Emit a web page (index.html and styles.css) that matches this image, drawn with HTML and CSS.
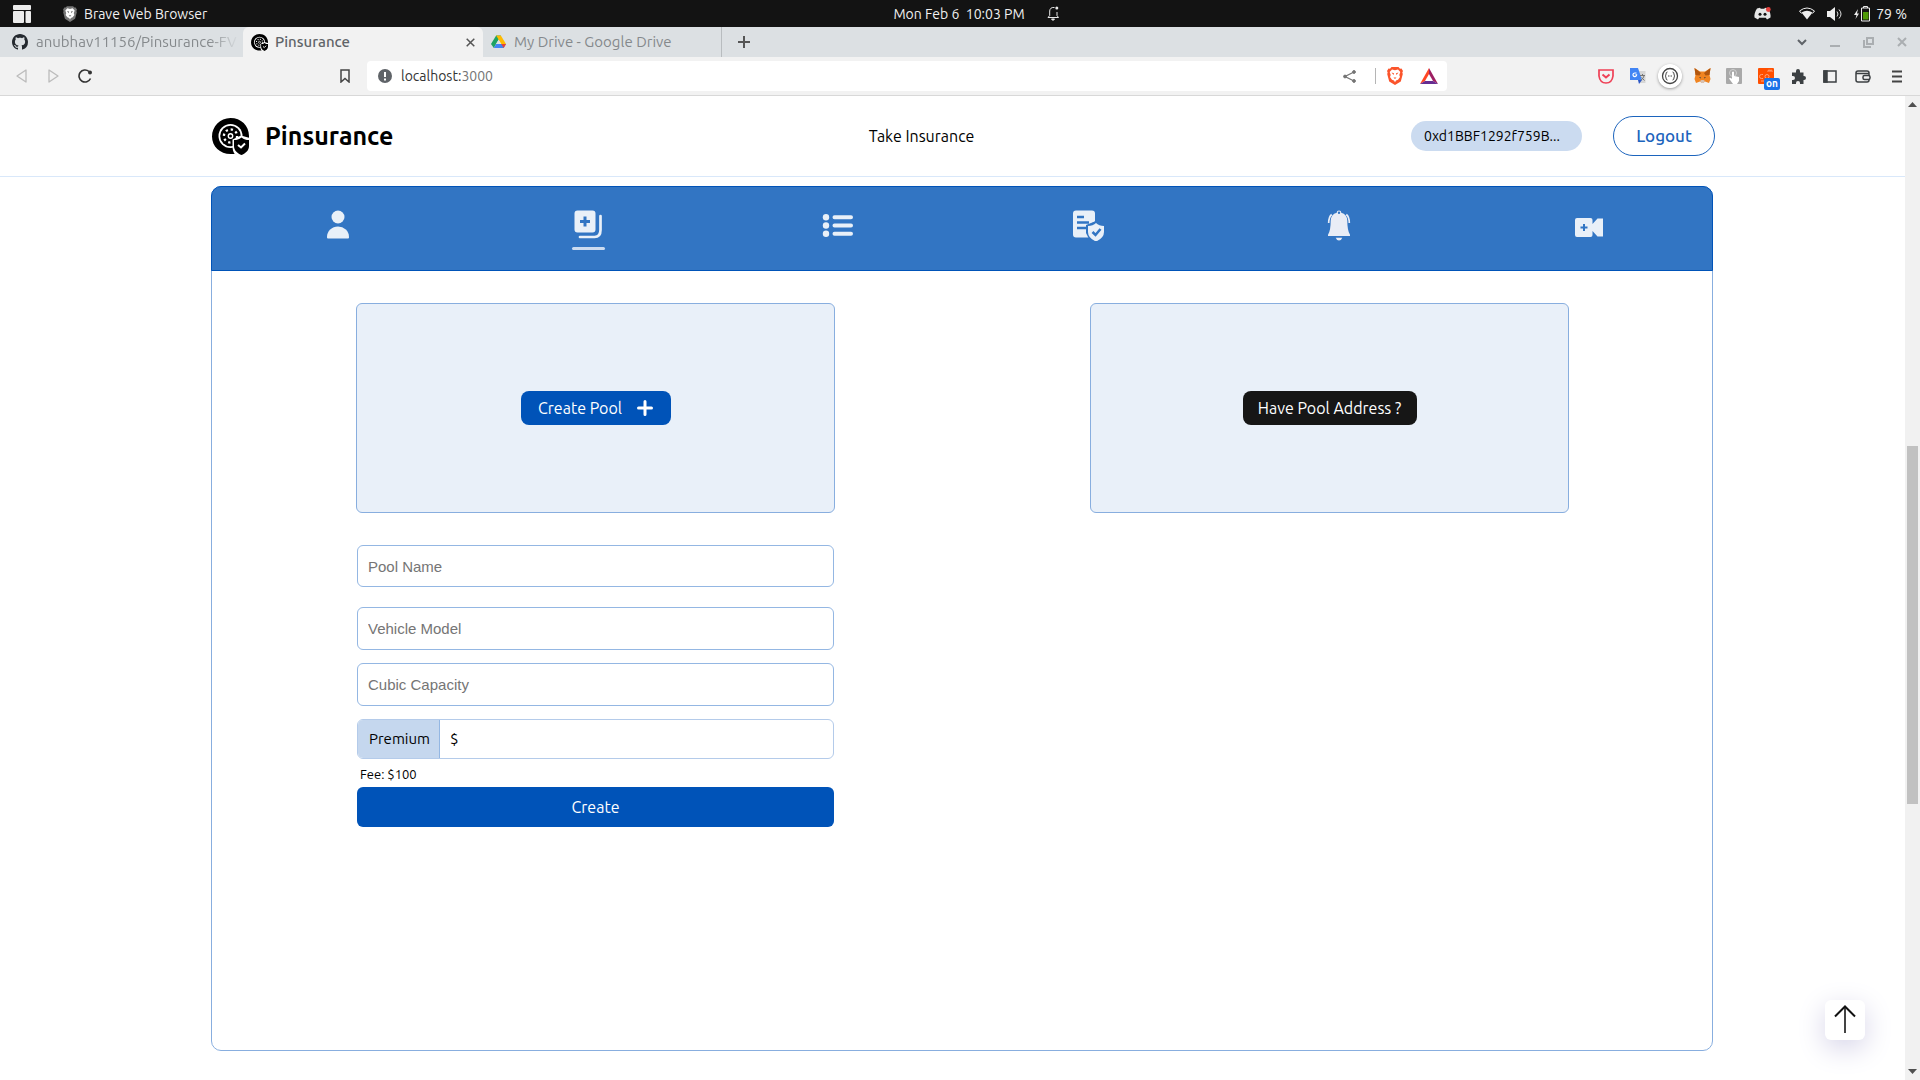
FILE: index.html
```html
<!DOCTYPE html>
<html lang="en">
<head>
<meta charset="utf-8">
<meta name="viewport" content="width=device-width, initial-scale=1">
<title>Pinsurance</title>
<link rel="stylesheet" href="styles.css">
</head>
<body>
<svg width="0" height="0" class="defs" aria-hidden="true">
  <symbol id="logo" viewBox="0 0 37 37">
    <path d="M18.500 0C29 0 37 7.500 37 18V30L30 37L23 36H18.500C8 36 0 28.500 0 18.500S8 0 18.500 0Z"/>
    <circle cx="18.500" cy="18" r="12" fill="#fff"/>
    <circle cx="18.500" cy="18" r="10.300"/>
    <circle cx="18.500" cy="18" r="6.600" fill="none" stroke="#fff" stroke-width="2.300" stroke-dasharray="2.300 2.880"/>
    <circle cx="18.500" cy="18" r="2.200" fill="none" stroke="#fff" stroke-width="1.400"/>
    <path d="M29 17.500 L38 20V29C38 34 32 37.500 29.500 38L23 36.500C21 34 20.500 31 20.500 28V21.500Z" fill="#fff"/>
    <path d="M29.500 19.500C32 21.500 34 22 37 22V28C37 33 33 35.500 29.500 37C26 35.500 22 33 22 28V22C25 22 27 21.500 29.500 19.500Z"/>
    <path d="M26 27l3 2.500 4-4" fill="none" stroke="#fff" stroke-width="2"/>
  </symbol>
  <symbol id="lion" viewBox="0 0 16 18">
    <path d="M4.500 0h7l1.500 1.700 1.500-.2L16 4l-.7 1.500.5 1.500-2 7.500L8 18l-5.800-3.500L.2 7l.5-1.500L0 4l1.500-2.500 1.500.2z" fill="currentColor"/>
    <path d="M8 3.200l3-.7 2.300 2.600-1 3 .7 1.900-2 2.700-2 .8L8 15.300l-1-1.800-2-.8L3 10l.7-1.900-1-3L5 2.500z" fill="#fff"/>
    <path d="M4.500 5.500l2.500.7L6.500 8zM11.500 5.500L9 6.200l.5 1.800zM6.500 10.500h3L8 12z" fill="currentColor"/>
  </symbol>
</svg>

<div class="topbar">
  <div class="topbar-left">
    <svg width="18" height="18" viewBox="0 0 18 18" fill="#ececec"><rect width="18" height="5" rx="1"/><rect y="6" width="11" height="12" rx="1"/><rect x="12.500" y="6" width="5.500" height="12" rx="1"/></svg>
    <div class="app-name">
      <svg width="14" height="16" class="lion-gray"><use href="#lion"/></svg>
      <span>Brave Web Browser</span>
    </div>
  </div>
  <div class="topbar-clock">
    <span>Mon Feb 6&nbsp; 10:03 PM</span>
    <svg width="12" height="15" viewBox="0 0 12 15" fill="none" stroke="#e8e8e8"><path d="M1 11.500h10.500L10 9.500V6M7.500 1.500C4 1 2.800 3 2.700 5v4.500L1 11.500"/><path d="M4.500 13h3L6 14.500z" fill="#e8e8e8"/><circle cx="9.800" cy="2" r="1.500" fill="#e8e8e8" stroke="none"/></svg>
  </div>
  <div class="topbar-right">
    <svg class="discord" width="17" height="13" viewBox="0 0 17 13"><path d="M3 1.500L6 .8l.7 1h3.600l.7-1 3 .7C16 4.500 17 8 16.500 10.500L13 12.500l-1.200-1.700H5.200L4 12.500.5 10.500C0 8 1 4.500 3 1.500z" fill="#e6e6e6"/><circle cx="6" cy="7.300" r="1.500" fill="#131313"/><circle cx="11" cy="7.300" r="1.500" fill="#131313"/><circle cx="14.300" cy="2.500" r="2.400" fill="#e4413e"/></svg>
    <svg width="16" height="13" viewBox="0 0 16 13"><path d="M2.500 5.500Q8 2 13.500 5.500L8 12.500z" fill="#eee"/><path d="M.5 4Q8-2 15.500 4L13.500 6.500" fill="none" stroke="#eee"/><path d="M.5 4l2 2.500" stroke="#eee"/></svg>
    <svg class="volume" width="16" height="14" viewBox="0 0 16 14"><path d="M0 4h3l5-4v14l-5-4H0z" fill="#eee"/><path d="M10 4.500q2 2.500 0 5M12 2.500q4 4.500 0 9" fill="none" stroke="#ddd"/></svg>
    <div class="battery">
      <svg width="17" height="16" viewBox="0 0 17 16"><path d="M4 3L0 9h2.500L1.500 13 5 7.500H3z" fill="#eee"/><path d="M9.500 2V.5h4V2M7.500 2h8v13h-8z" fill="none" stroke="#eee"/><rect x="9" y="6" width="5.500" height="7.500" fill="#4e9a06"/></svg>
      <span>79 %</span>
    </div>
  </div>
</div>

<div class="tabstrip">
  <div class="tab tab-github">
    <svg width="16" height="16" viewBox="0 0 16 16" fill="#24292f"><path d="M8 0C3.580 0 0 3.580 0 8c0 3.540 2.290 6.530 5.470 7.590.4.070.55-.17.55-.38 0-.19-.01-.82-.01-1.490-2.010.37-2.530-.49-2.690-.94-.09-.23-.48-.94-.82-1.130-.28-.15-.68-.52-.01-.53.63-.01 1.080.58 1.230.82.72 1.210 1.870.87 2.330.66.07-.52.28-.87.51-1.070-1.780-.2-3.640-.89-3.640-3.950 0-.87.31-1.590.82-2.150-.08-.2-.36-1.020.08-2.120 0 0 .67-.21 2.200.82.64-.18 1.320-.27 2-.27s1.360.09 2 .27c1.530-1.040 2.200-.82 2.200-.82.44 1.100.16 1.920.08 2.120.51.56.82 1.270.82 2.150 0 3.070-1.870 3.750-3.650 3.950.29.25.54.73.54 1.480 0 1.070-.01 1.930-.01 2.200 0 .21.15.46.55.38A8.010 8.010 0 0 0 16 8c0-4.420-3.580-8-8-8z"/></svg>
    <span class="tab-title">anubhav11156/Pinsurance-FV</span>
  </div>
  <div class="tab tab-active">
    <svg width="17" height="17"><use href="#logo"/></svg>
    <span class="tab-title">Pinsurance</span>
    <button class="plain" aria-label="Close tab"><svg width="9" height="9" viewBox="0 0 9 9" stroke="#555" stroke-width="1.500"><path d="M.7.700l7.600 7.600M8.300.700L.7 8.300"/></svg></button>
  </div>
  <div class="tab tab-drive">
    <svg width="15" height="14" viewBox="0 0 16 14"><path d="M5.500 0h5L8 4.500 3 13.500 0 9z" fill="#1ea362"/><path d="M5.500 0h5L16 9h-5z" fill="#ffba00"/><path d="M3 13.500L5.500 9H16l-2.500 4.500z" fill="#4285f4"/><path d="M11 9h5l-2.500 4.500z" fill="#ea4335"/><path d="M8 4.700L10.600 9H5.400z" fill="#dce0e3"/></svg>
    <span class="tab-title">My Drive - Google Drive</span>
  </div>
  <button class="plain new-tab" aria-label="New tab"><svg width="12" height="12" viewBox="0 0 12 12" stroke="#555" stroke-width="2"><path d="M6 0v12M0 6h12"/></svg></button>
  <div class="window-controls">
    <button class="plain" aria-label="Search tabs"><svg width="10" height="7" viewBox="0 0 10 7" fill="none" stroke="#5f6368" stroke-width="2"><path d="M1 1l4 4 4-4"/></svg></button>
    <button class="plain" aria-label="Minimize"><svg width="10" height="10" viewBox="0 0 10 10"><path d="M0 8h10v2H0z" fill="#aaaeb1"/></svg></button>
    <button class="plain" aria-label="Restore"><svg width="11" height="11" viewBox="0 0 11 11" fill="none" stroke="#aaaeb1" stroke-width="2"><path d="M4 1h6v6H4zM1 3v7h7"/></svg></button>
    <button class="plain" aria-label="Close"><svg width="10" height="10" viewBox="0 0 10 10" stroke="#aaaeb1" stroke-width="2"><path d="M1 1l8 8M9 1L1 9"/></svg></button>
  </div>
</div>

<div class="toolbar">
  <div class="nav-buttons">
    <button class="plain" aria-label="Back"><svg width="12" height="14" viewBox="0 0 12 14" fill="none" stroke="#bbb" stroke-width="1.300" stroke-linejoin="round"><path d="M10 1v12L1 7z"/></svg></button>
    <button class="plain" aria-label="Forward"><svg width="12" height="14" viewBox="0 0 12 14" fill="none" stroke="#bbb" stroke-width="1.300" stroke-linejoin="round"><path d="M2 1v12l9-6z"/></svg></button>
    <button class="plain" aria-label="Reload"><svg width="15" height="15" viewBox="0 0 15 15" fill="none" stroke="#333" stroke-width="1.600"><path d="M12.500 9.500A6 6 0 1 1 11 2.500"/><circle cx="12" cy="3.500" r="2" fill="#333" stroke="none"/></svg></button>
  </div>
  <button class="plain bookmark" aria-label="Bookmark"><svg width="10" height="14" viewBox="0 0 10 14" fill="none" stroke="#444" stroke-width="1.500"><path d="M1 1h8v12L5 9.500 1 13z"/></svg></button>
  <div class="address-bar">
    <svg width="14" height="14" viewBox="0 0 14 14"><circle cx="7" cy="7" r="7" fill="#5f6368"/><path d="M7 3v5M7 9.500v2" stroke="#fff" stroke-width="2"/></svg>
    <span class="url">localhost:<span class="port">3000</span></span>
    <svg class="share" width="13" height="13" viewBox="0 0 13 13" fill="#757575" stroke="#757575"><path d="M11 2L2 6.500 11 11" fill="none" stroke-width="1.300"/><circle cx="11" cy="2" r="1.400"/><circle cx="2" cy="6.500" r="1.400"/><circle cx="11" cy="11" r="1.400"/></svg>
    <span class="bar-divider"></span>
    <svg class="lion-orange" width="16" height="18"><use href="#lion"/></svg>
    <svg width="18" height="16" viewBox="0 0 18 16"><path d="M9 0L0 16l5-3 4-7z" fill="#ff4724"/><path d="M9 0l9 16-5-3-4-7z" fill="#9e1f63"/><path d="M0 16h18l-5-3H5z" fill="#662d91"/></svg>
  </div>
  <div class="extensions">
    <svg width="16" height="15" viewBox="0 0 16 15" fill="none" stroke="#ef4056" stroke-width="1.700"><path d="M1 1h14v6q-1 7-7 7T1 7z"/><path d="M4.500 5.500L8 8.500l3.500-3" stroke-width="2"/></svg>
    <svg width="16" height="16" viewBox="0 0 16 16"><path d="M7 3h8.500v12H9z" fill="#d6d6d6"/><path d="M0 0h8l4 12H0z" fill="#4285f4"/><path d="M8 12h4l-3 4z" fill="#2a56c6"/><path d="M6.500 5H5a1.800 1.800 0 1 0 1.600 1.800H5.500" fill="none" stroke="#fff" stroke-width="1.200"/><path d="M10 7.500h5M12.500 6v1.500M14 8q-1 3-3 4M11.500 9.500l3 3" fill="none" stroke="#757575"/></svg>
    <svg class="round-ext" width="24" height="24" viewBox="0 0 24 24" fill="none" stroke="#444"><circle cx="12" cy="12" r="12" fill="#fff" stroke="none"/><circle cx="12" cy="12" r="7.500" stroke-width="1.300"/><path d="M9.500 8q-1.500 0-1.500 2t-1 2q1 0 1 2t1.500 2M14.500 8q1.500 0 1.500 2t1 2q-1 0-1 2t-1.500 2"/><path d="M10 12h4" stroke-dasharray="1 .5"/></svg>
    <svg width="17" height="16" viewBox="0 0 17 16"><path d="M.5 0L6 3.500h5L16.500 0 15.500 7l1 4-1.500 4-4-1.500-2 1.500H8l-2-1.500L2 15 .5 11l1-4z" fill="#f08421"/><path d="M.5 0L7 5 5.500 7.500 1.500 7zM16.500 0L10 5l1.500 2.500 4-.5z" fill="#b1560f"/><path d="M6 13l1.500-1h2l1.500 1-1.500 2h-2z" fill="#d7c1b3"/><path d="M5 9l2 .5-.5 1zM12 9l-2 .5.5 1z" fill="#233447"/></svg>
    <svg width="16" height="16" viewBox="0 0 16 16"><rect width="16" height="16" rx="1" fill="#a9a9a9"/><circle cx="7" cy="5" r="3.500" fill="none" stroke="#d0d0d0"/><path d="M6 4q1.200-1 2 0v4l5 1v4l-2 3H7L3 10.500l1-.8 2 1z" fill="#fff"/></svg>
    <span class="code-ext"><svg width="16" height="16" viewBox="0 0 16 16"><rect width="16" height="16" rx="1" fill="#ff4f00"/><path d="M5 6.500H3.500a2 2 0 0 0 0 4H5M7 8.500a2 2 0 1 0 4 0 2 2 0 1 0-4 0M10 4V2.500q1.200-1 2 0V4M12 2.500q1.200-1 2 0V4M3 13h3" fill="none" stroke="#ffa27a"/></svg><b>on</b></span>
    <svg width="15" height="15" viewBox="0 0 15 15" fill="#3c4043"><path d="M1 3.500h4V2a2 2 0 0 1 4 0v1.500h3.500V7H13a2 2 0 0 1 0 4h-.5v4H9v-1a2 2 0 0 0-4 0v1H1v-4h1a2 2 0 0 0 0-4H1z"/></svg>
    <svg width="14" height="13" viewBox="0 0 14 13" fill="none" stroke="#3c4043" stroke-width="1.500"><path d="M1 1h12v11H1z"/><path d="M1 1h3v11H1z" fill="#3c4043"/></svg>
    <svg width="16" height="13" viewBox="0 0 16 13" fill="none" stroke="#3c4043" stroke-width="1.500"><rect x="1" y="1" width="13" height="11" rx="2"/><path d="M1 3.500h13"/><rect x="8" y="5.500" width="7" height="4" rx="1.500" fill="#f2f2f2"/></svg>
    <svg width="10" height="13" viewBox="0 0 10 13" stroke="#444" stroke-width="2"><path d="M0 1.500h10M0 6.500h10M0 11.500h10"/></svg>
  </div>
</div>

<div class="viewport">
  <div class="page">
    <header class="site-header">
      <a class="brand" href="#"><svg width="37" height="37"><use href="#logo"/></svg><span>Pinsurance</span></a>
      <a class="menu-link" href="#">Take Insurance</a>
      <div class="account">
        <span class="wallet">0xd1BBF1292f759B...</span>
        <button class="logout">Logout</button>
      </div>
    </header>
    <main class="panel">
      <nav class="panel-nav">
        <button class="plain" aria-label="Profile"><svg width="32" height="32" viewBox="0 0 32 32" fill="#e9f0f8"><circle cx="16" cy="8" r="6.500"/><path d="M5 28.500V28a11 10.500 0 0 1 22 0v.5q0 1-1 1H6q-1 0-1-1z"/></svg></button>
        <button class="plain selected" aria-label="Create pool"><svg width="32" height="32" viewBox="0 0 32 32" fill="#e9f0f8"><path fill-rule="evenodd" d="M5.500 1.500h15q3 0 3 3v16q0 3-3 3h-15q-3 0-3-3v-16q0-3 3-3zM11.500 7.500v3.500H8v3h3.500v3.500h3v-3.500H18v-3h-3.500V7.500z"/><path d="M28.500 7v14q0 7-6 7H8" fill="none" stroke="#e9f0f8" stroke-width="2.700" stroke-linecap="round"/></svg></button>
        <button class="plain" aria-label="Pools"><svg width="32" height="32" viewBox="0 0 32 32" fill="#e9f0f8" stroke="#e9f0f8"><g stroke="none"><circle cx="4" cy="8.300" r="3.200"/><circle cx="4" cy="16.500" r="3.200"/><circle cx="4" cy="24.800" r="3.200"/></g><path d="M12.500 8.300h16.500M12.500 16.500h16.500M12.500 24.800h16.500" stroke-width="4" stroke-linecap="round"/></svg></button>
        <button class="plain" aria-label="Policies"><svg width="32" height="32" viewBox="0 0 32 32"><path d="M4 1.500h16q3 0 3 3v8l-6 3v7l2 6H4q-3 0-3-3v-21q0-3 3-3z" fill="#e9f0f8"/><path d="M5 8h7M5 13.500h12M5 19h9" stroke="#3275c3" stroke-width="2.500"/><path d="M24 12l9 4v14h-16l-3-6v-8z" fill="#3275c3"/><path d="M24 14q3 3 8 3v6q0 6-8 9.500-8-3.500-8-9.500v-6q5 0 8-3z" fill="#e9f0f8"/><path d="M20.500 23l3 3 5-6" fill="none" stroke="#3275c3" stroke-width="2.500"/></svg></button>
        <button class="plain" aria-label="Notifications"><svg width="32" height="32" viewBox="-1 0 32 32" fill="#e9edf6"><path fill-rule="evenodd" d="M13.700 3.800a2.300 2.300 0 1 1 4.600 0q5.700 1.500 6 8 0 10 2.700 14v1.200H5v-1.200q2.700-4 2.700-14Q8 5.300 13.700 3.800zm2.300-1.300a1.200 1.200 0 1 0 0 2.400 1.200 1.200 0 0 0 0-2.400z"/><path d="M12.700 28.700h6.600q-1 2.800-3.300 2.800t-3.300-2.800z"/><path d="M5.700 14q0-6 3-8.500M26.300 14q0-6-3-8.500" fill="none" stroke="#e9edf6" stroke-width="1.700"/></svg></button>
        <button class="plain" aria-label="Video call"><svg width="32" height="32" viewBox="-1 0 32 32" fill="#e9f0f8"><path fill-rule="evenodd" d="M4 9h13.500q2 0 2 2v4l5-5.500H30v18h-5.500L19.500 22v4q0 2-2 2H4q-2 0-2-2V11q0-2 2-2zM10 15v2.500H7.500v2H10V22h2v-2.500h2.500v-2H12V15z"/></svg></button>
      </nav>
      <div class="panel-body">
        <section class="column">
          <div class="card"><button class="card-button create-pool">Create Pool <svg width="16" height="16" viewBox="0 0 16 16" stroke="#fff" stroke-width="3" stroke-linecap="round"><path d="M8 1.500v13M1.500 8h13"/></svg></button></div>
          <form class="pool-form">
            <input class="field" type="text" placeholder="Pool Name" aria-label="Pool Name">
            <div class="vehicle">
              <input class="field" type="text" placeholder="Vehicle Model" aria-label="Vehicle Model">
              <input class="field" type="text" placeholder="Cubic Capacity" aria-label="Cubic Capacity">
              <div class="premium"><label for="premium">Premium</label><span>$</span><input id="premium" type="text"></div>
            </div>
            <p class="fee">Fee: $100</p>
            <button class="submit" type="button">Create</button>
          </form>
        </section>
        <section class="column">
          <div class="card"><button class="card-button have-pool">Have Pool Address ?</button></div>
        </section>
      </div>
    </main>
  </div>
  <div class="scrollbar">
    <svg width="9" height="5" viewBox="0 0 9 5"><path d="M0 5l4.500-5L9 5z" fill="#505050"/></svg>
    <div class="track"><div class="thumb"></div></div>
    <svg width="9" height="5" viewBox="0 0 9 5"><path d="M0 0l4.500 5L9 0z" fill="#505050"/></svg>
  </div>
  <button class="to-top" aria-label="Back to top"><svg width="22" height="30" viewBox="0 0 22 30" fill="none" stroke="#111" stroke-width="2"><path d="M11 2v26" stroke="#444"/><path d="M1 11.500L11 1.500l10 10"/></svg></button>
</div>
</body>
</html>
```
FILE: styles.css
```css
* { box-sizing: border-box; }

body {
  margin: 0;
  height: 100vh;
  display: flex;
  flex-direction: column;
  overflow: hidden;
  background: #fff;
  color: #000;
  font: 16px/20px Ubuntu, "Noto Sans", sans-serif;
}

svg { display: block; flex: none; }
.defs { position: absolute; }
a { color: inherit; text-decoration: none; }
button, input { font: inherit; color: inherit; }
button { cursor: pointer; border: 0; padding: 0; }
.plain { background: none; display: flex; align-items: center; justify-content: center; }

/* Desktop bar */
.topbar {
  flex: none;
  height: 27px;
  padding: 0 13px;
  display: grid;
  grid-template-columns: 1fr auto 1fr;
  align-items: center;
  background: #131313;
  color: #f0f0f0;
  font-size: 14px;
}
.topbar-left, .topbar-clock, .topbar-right, .app-name, .battery { display: flex; align-items: center; }
.topbar-left { gap: 32px; }
.app-name { gap: 7px; }
.lion-gray { color: #777; }
.topbar-clock { gap: 22px; padding-left: 32px; }
.topbar-right { justify-content: flex-end; }
.discord { margin-right: 28px; }
.volume { margin: 0 11px 0 12px; }
.battery { gap: 5px; }

/* Tab strip */
.tabstrip {
  flex: none;
  height: 30px;
  display: flex;
  align-items: center;
  background: #dce0e3;
  color: #85898c;
  font-size: 15px;
}
.tab { height: 30px; display: flex; align-items: center; padding: 0 8px; }
.tab-title { flex: 1; white-space: nowrap; overflow: hidden; }
.tab-github { width: 243px; padding: 0 4px 0 12px; gap: 8px; }
.tab-github .tab-title {
  -webkit-mask-image: linear-gradient(to right, #000 85%, transparent);
  mask-image: linear-gradient(to right, #000 85%, transparent);
}
.tab-active {
  width: 240px;
  gap: 7px;
  background: #f2f2f2;
  color: #606468;
  font-weight: 500;
  border-radius: 6px 6px 0 0;
}
.tab-drive { width: 239px; gap: 8px; border-right: 1px solid #b8bcbf; }
.new-tab { margin-left: 16px; }
.window-controls { margin-left: auto; padding-right: 13px; display: flex; align-items: center; gap: 23px; }

/* Toolbar */
.toolbar {
  flex: none;
  height: 39px;
  display: flex;
  align-items: center;
  background: #f2f2f2;
  border-bottom: 1px solid #d8d8d8;
  font-size: 14px;
}
.nav-buttons { display: flex; gap: 19px; padding-left: 16px; }
.bookmark { margin-left: 247px; }
.address-bar {
  width: 1080px;
  height: 30px;
  margin-left: 17px;
  padding: 0 9px 0 11px;
  display: flex;
  align-items: center;
  background: #fff;
  border-radius: 4px;
}
.url { flex: 1; margin-left: 9px; color: #333; }
.port { color: #757575; }
.bar-divider { width: 1px; height: 16px; margin: 0 11px 0 19px; background: #b5b5b5; }
.lion-orange { color: #fb542b; margin-right: 17px; }
.extensions {
  margin-left: auto;
  padding-right: 6px;
  display: grid;
  grid-template-columns: repeat(8, 32px) repeat(2, 34px);
  align-items: center;
  justify-items: center;
}
.round-ext { border-radius: 50%; box-shadow: 0 1px 3px #999; }
.code-ext { position: relative; }
.code-ext b {
  position: absolute;
  left: 6px;
  top: 10px;
  width: 16px;
  height: 12px;
  border-radius: 2px;
  background: #1a73e8;
  color: #fff;
  font-size: 10px;
  line-height: 12px;
  text-align: center;
}

/* Page */
.viewport { flex: 1; min-height: 0; display: flex; position: relative; }
.page { flex: 1; overflow: hidden; display: flex; flex-direction: column; }
.site-header {
  flex: none;
  height: 81px;
  padding: 0 190px 0 212px;
  display: grid;
  grid-template-columns: 1fr auto 1fr;
  align-items: center;
  border-bottom: 1px solid #d9e8fa;
}
.brand { display: flex; align-items: center; gap: 16px; font-size: 25px; line-height: 32px; font-weight: 700; }
.menu-link { padding-right: 84px; }
.account { display: flex; justify-content: flex-end; align-items: center; gap: 31px; }
.wallet { width: 171px; padding: 5px 13px; border-radius: 15px; background: #cbdbf0; font-size: 14px; white-space: nowrap; }
.logout { width: 102px; height: 40px; border: 1px solid #1c64bd; border-radius: 20px; background: #fff; color: #1c64bd; font-size: 17px; font-weight: 500; }

.panel {
  margin: 9px 192px 29px 211px;
  flex: 1;
  border: 1px solid #88aedf;
  border-radius: 10px;
}
.panel-nav {
  height: 85px;
  margin: -1px -1px 0;
  display: grid;
  grid-template-columns: repeat(6, 1fr);
  background: #3275c3;
  border: 1px solid #0053b8;
  border-radius: 10px 10px 0 0;
}
.panel-nav button { flex-direction: column; justify-content: flex-start; gap: 6px; padding: 22px 0 0 2px; }
.selected::after { content: ""; width: 33px; height: 3px; border-radius: 2px; background: #cbdbf0; }

.panel-body { padding: 32px 143px 32px 144px; display: grid; grid-template-columns: 1fr 1fr; gap: 255px; }
.card {
  height: 210px;
  display: flex;
  align-items: center;
  justify-content: center;
  background: #e9f0f9;
  border: 1px solid #88aedf;
  border-radius: 6px;
}
.card-button {
  height: 34px;
  display: flex;
  align-items: center;
  justify-content: center;
  border-radius: 8px;
  color: #fff;
}
.create-pool { width: 150px; gap: 15px; background: #0053b8; }
.have-pool { width: 174px; background: #161616; }

.pool-form { margin-top: 32px; padding: 0 1px; }
.field {
  display: block;
  width: 100%;
  height: 42px;
  padding: 0 10px;
  border: 1px solid #94b7e3;
  border-radius: 6px;
  background: #fff;
  font-family: "Liberation Sans", Arial, sans-serif;
  font-size: 15px;
}
.field::placeholder { color: #757575; }
.vehicle { margin-top: 20px; display: grid; gap: 13px; }
.vehicle .field { height: 43px; }
.premium { height: 40px; display: flex; align-items: center; border: 1px solid #b4cbea; border-radius: 6px; overflow: hidden; font-size: 15px; }
.premium label { width: 82px; padding-left: 2px; align-self: stretch; display: flex; align-items: center; justify-content: center; background: #c5d7ee; border-right: 1px solid #94b7e3; }
.premium span { padding: 0 10px; }
.premium input { flex: 1; border: 0; background: none; outline: 0; }
.fee { margin: 5px 3px 3px; font-size: 13px; }
.submit { display: block; width: 100%; height: 40px; border-radius: 6px; background: #0053b8; color: #fff; }

.scrollbar { width: 15px; padding: 6px 0; display: flex; flex-direction: column; align-items: center; gap: 6px; background: #f1f1f1; }
.track { flex: 1; width: 100%; display: flex; flex-direction: column; align-items: center; }
.track::before { content: ""; flex: 333; }
.track::after { content: ""; flex: 259; }
.thumb { flex: 358; width: 11px; background: #c1c1c1; }

.to-top {
  position: absolute;
  right: 55px;
  bottom: 40px;
  width: 40px;
  height: 40px;
  display: flex;
  align-items: center;
  justify-content: center;
  background: #fff;
  border-radius: 6px;
  box-shadow: 0 8px 28px #d5d3e8;
}
```
